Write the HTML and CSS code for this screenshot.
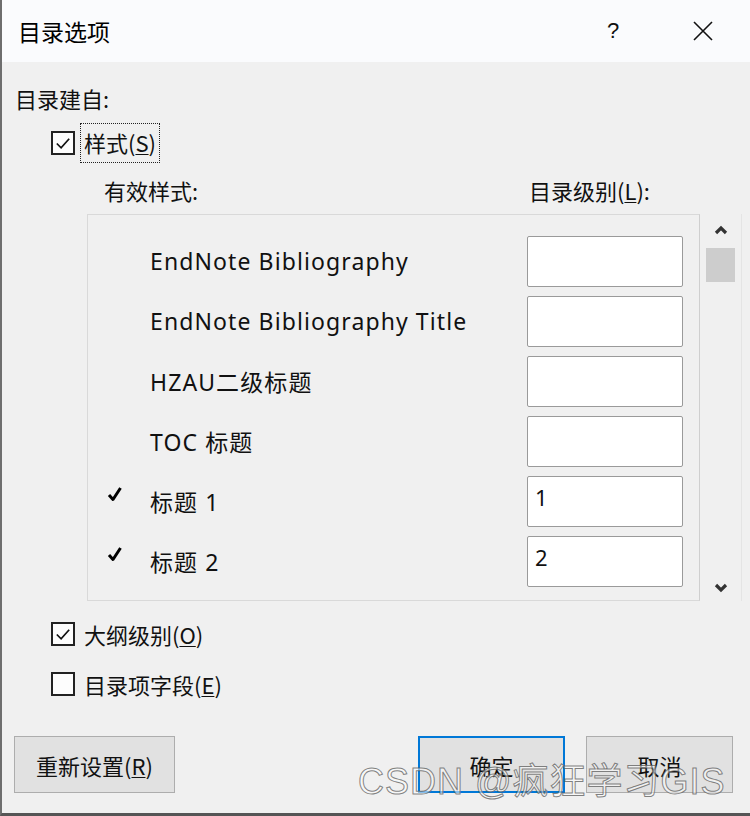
FILE: index.html
```html
<!DOCTYPE html>
<html lang="zh">
<head>
<meta charset="utf-8">
<link rel="stylesheet" href="styles.css">
</head>
<body>
<div class="window">
  <div class="titlebar">
    <span class="title">目录选项</span>
    <span class="help">?</span>
    <span class="close">
      <svg width="20" height="20" viewBox="0 0 20 20"><path d="M1 1 L19 19 M19 1 L1 19" stroke="#111" stroke-width="1.6" fill="none"/></svg>
    </span>
  </div>
  <div class="content">
    <div class="section-label">目录建自:</div>
    <div class="check-row styles-row">
      <span class="checkbox"><svg width="21" height="21" viewBox="0 0 21 21"><path d="M4 10.5 L8.5 15 L17 5.5" stroke="#111" stroke-width="1.8" fill="none"/></svg></span>
      <span class="focus-label">样式(<u>S</u>)</span>
    </div>
    <div class="headers">
      <span class="h-styles">有效样式:</span>
      <span class="h-level">目录级别(<u>L</u>):</span>
    </div>
    <div class="list-wrap">
      <div class="list">
        <div class="row"><span class="mark"></span><span class="name">EndNote Bibliography</span><span class="level"></span></div>
        <div class="row"><span class="mark"></span><span class="name">EndNote Bibliography Title</span><span class="level"></span></div>
        <div class="row"><span class="mark"></span><span class="name">HZAU二级标题</span><span class="level"></span></div>
        <div class="row"><span class="mark"></span><span class="name">TOC 标题</span><span class="level"></span></div>
        <div class="row"><span class="mark"><svg width="16" height="16" viewBox="0 0 16 16"><path d="M2 9 L6 13.5 L13.5 2" stroke="#000" stroke-width="3" fill="none" stroke-linejoin="round"/></svg></span><span class="name">标题 1</span><span class="level">1</span></div>
        <div class="row"><span class="mark"><svg width="16" height="16" viewBox="0 0 16 16"><path d="M2 9 L6 13.5 L13.5 2" stroke="#000" stroke-width="3" fill="none" stroke-linejoin="round"/></svg></span><span class="name">标题 2</span><span class="level">2</span></div>
      </div>
      <div class="scrollbar">
        <svg class="arrow" width="14" height="10" viewBox="0 0 14 10"><path d="M2 8 L7 3 L12 8" stroke="#333" stroke-width="3.2" fill="none"/></svg>
        <div class="thumb"></div>
        <div class="track"></div>
        <svg class="arrow" width="14" height="10" viewBox="0 0 14 10"><path d="M2 2 L7 7 L12 2" stroke="#333" stroke-width="3.2" fill="none"/></svg>
      </div>
    </div>
    <div class="check-row outline-row">
      <span class="checkbox"><svg width="21" height="21" viewBox="0 0 21 21"><path d="M4 10.5 L8.5 15 L17 5.5" stroke="#111" stroke-width="1.8" fill="none"/></svg></span>
      <span class="plain-label">大纲级别(<u>O</u>)</span>
    </div>
    <div class="check-row field-row">
      <span class="checkbox"></span>
      <span class="plain-label">目录项字段(<u>E</u>)</span>
    </div>
    <div class="buttons">
      <button class="btn reset">重新设置(<u>R</u>)</button>
      <span class="spacer"></span>
      <button class="btn ok">确定</button>
      <button class="btn cancel">取消</button>
    </div>
  </div>
  <div class="watermark">CSDN @疯狂学习GIS</div>
</div>
</body>
</html>
```

FILE: styles.css
```css
* { box-sizing: border-box; }
html, body { margin: 0; padding: 0; }
body {
  width: 750px;
  height: 816px;
  overflow: hidden;
  background: #f0f0f0;
  font-family: "Noto Sans", "Noto Sans CJK SC", sans-serif;
  color: #111;
}
u { text-decoration: underline; text-underline-offset: 2px; text-decoration-thickness: 1px; }

.window {
  position: relative;
  width: 750px;
  height: 816px;
  border-left: 2px solid #6e6e6e;
  border-bottom: 3px solid #555;
  background: #f0f0f0;
}

.titlebar {
  height: 62px;
  background: #fafbfd;
  display: flex;
  align-items: center;
  padding-left: 16px;
}
.title { font-family: "Noto Sans CJK SC", sans-serif; font-size: 23px; flex: 1; color: #000; }
.help { font-size: 22px; width: 30px; margin-right: 56px; font-family: "Liberation Sans", sans-serif; color: #111; }
.close { width: 20px; height: 20px; margin-right: 37px; display: flex; }

.content { padding-left: 13px; }

.section-label {
  margin-top: 21px;
  height: 30px;
  line-height: 30px;
  font-size: 22px;
  font-family: "Noto Sans CJK SC", sans-serif;
}

.check-row {
  display: flex;
  align-items: center;
  height: 40px;
  margin-left: 36px;
  font-family: "Noto Sans CJK SC", sans-serif;
  font-size: 22px;
}
.styles-row { margin-top: 10px; }
.checkbox {
  width: 24px;
  height: 24px;
  border: 2px solid #222;
  background: #fdfdfd;
  display: flex;
  align-items: center;
  justify-content: center;
  flex: none;
}
.focus-label {
  margin-left: 5px;
  height: 40px;
  line-height: 36px;
  padding: 0 3px 0 3px;
  border: 1.5px dotted #222;
}
.plain-label { margin-left: 9px; }

.headers {
  margin-top: 12px;
  height: 30px;
  line-height: 30px;
  display: flex;
  font-family: "Noto Sans CJK SC", sans-serif;
  font-size: 22px;
}
.h-styles { margin-left: 89px; width: 425px; }

.list-wrap {
  margin-top: 9px;
  margin-left: 72px;
  display: flex;
  height: 387px;
}
.list {
  width: 613px;
  height: 387px;
  border: 1px solid #d9d9d9;
  border-right-color: #cfcfcf;
  padding-top: 16px;
  overflow: hidden;
  background: #f0f0f0;
}
.row {
  height: 60px;
  display: flex;
  align-items: center;
}
.mark { width: 62px; padding-left: 19px; display: flex; align-items: center; margin-top: -14px; }
.name { flex: 1; font-size: 23px; letter-spacing: 1.1px; color: #111; font-family: "Noto Sans", "Noto Sans CJK SC", sans-serif; }
.level {
  width: 156px;
  height: 51px;
  margin-right: 16px;
  background: #fff;
  border: 1.5px solid #9a9a9a;
  border-radius: 2px;
  font-size: 22px;
  line-height: 40px;
  padding-left: 7px;
  font-family: "Noto Sans", sans-serif;
}

.scrollbar {
  width: 42px;
  height: 387px;
  display: flex;
  flex-direction: column;
  align-items: center;
  border-right: 1px solid #e4e4e4;
}
.scrollbar .arrow { margin-top: 11px; flex: none; }
.scrollbar .arrow:last-child { margin-top: 0; margin-bottom: 8px; }
.thumb { width: 29px; height: 34px; background: #cdcdcd; margin-top: 13px; }
.track { flex: 1; }

.outline-row { margin-top: 13px; }
.field-row { margin-top: 10px; }

.buttons {
  display: flex;
  margin-top: 32px;
  margin-left: -1px;
  height: 57px;
}
.btn {
  font-family: "Noto Sans CJK SC", sans-serif;
  font-size: 22px;
  color: #111;
  background: #e1e1e1;
  border: 1.5px solid #adadad;
  height: 57px;
  padding: 0;
}
.reset { width: 161px; }
.spacer { flex: 1; }
.ok { width: 147px; border: 2px solid #0078d7; margin-right: 21px; }
.cancel { width: 147px; margin-right: 17px; }

.watermark {
  position: absolute;
  left: 356px;
  top: 752px;
  font-family: "Liberation Sans", "Noto Sans CJK SC", sans-serif;
  font-size: 36px;
  letter-spacing: 1px;
  color: rgba(255, 255, 255, 0.55);
  -webkit-text-stroke: 1px rgba(90, 90, 90, 0.75);
  pointer-events: none;
  white-space: nowrap;
}
```
